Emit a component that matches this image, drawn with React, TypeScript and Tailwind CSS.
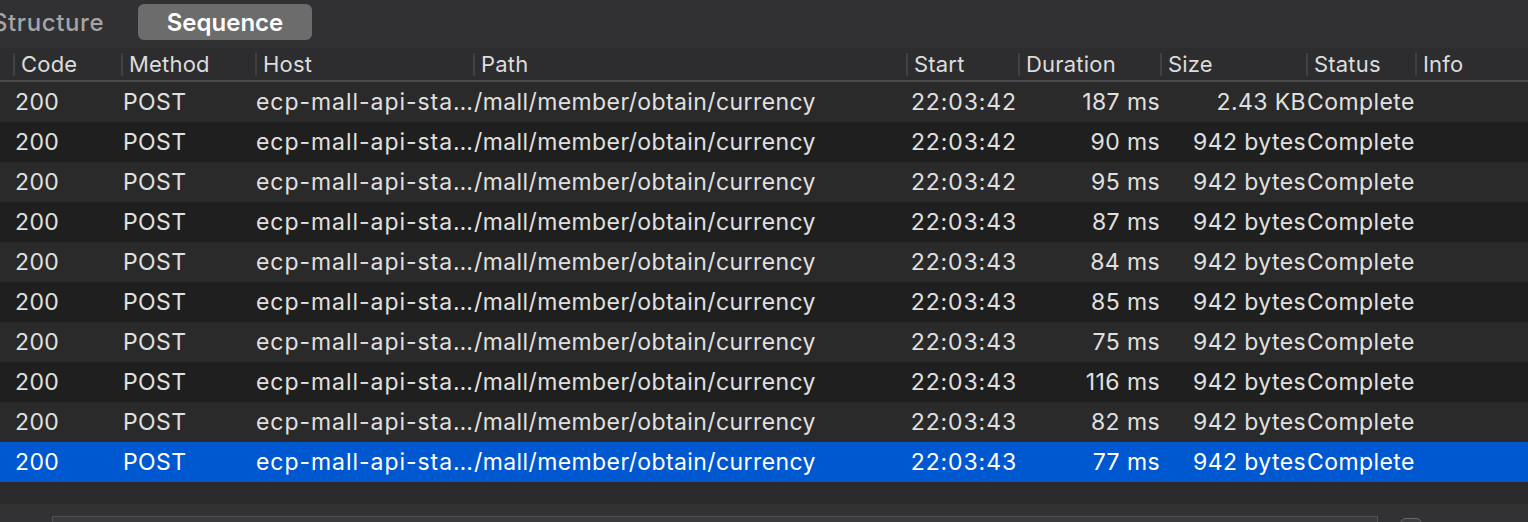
import React from 'react';

type Row = { start: string; duration: string; size: string };

const rows: Row[] = [
  { start: '22:03:42', duration: '187 ms', size: '2.43 KB' },
  { start: '22:03:42', duration: '90 ms', size: '942 bytes' },
  { start: '22:03:42', duration: '95 ms', size: '942 bytes' },
  { start: '22:03:43', duration: '87 ms', size: '942 bytes' },
  { start: '22:03:43', duration: '84 ms', size: '942 bytes' },
  { start: '22:03:43', duration: '85 ms', size: '942 bytes' },
  { start: '22:03:43', duration: '75 ms', size: '942 bytes' },
  { start: '22:03:43', duration: '116 ms', size: '942 bytes' },
  { start: '22:03:43', duration: '82 ms', size: '942 bytes' },
  { start: '22:03:43', duration: '77 ms', size: '942 bytes' },
];

const cols = 'grid grid-cols-[13px_108px_134px_218px_433px_112px_142px_146px_109px_113px]';

const headers = ['Code', 'Method', 'Host', 'Path', 'Start', 'Duration', 'Size', 'Status', 'Info'];

const App = () => {
  return (
    <div className="w-[1528px] h-[522px] overflow-hidden bg-[#2a2a2a] font-['Inter','Liberation_Sans',sans-serif] text-[#e0e0e0] flex flex-col">
      {/* tab bar */}
      <div className="h-[48px] bg-[#313133] flex items-start pt-[4px] shrink-0">
        <div className="ml-[-8px] w-[116px] h-[37px] flex items-center text-[24px] tracking-[0.6px] text-[#a4a4a4] font-medium whitespace-nowrap">
          Structure
        </div>
        <div className="ml-[30px] w-[174px] h-[36px] rounded-md bg-[#6c6c6c] flex items-center justify-center text-[24px] font-semibold text-white pt-[1px]">
          Sequence
        </div>
      </div>

      {/* header */}
      <div className={`${cols} h-[34px] bg-[#2d2d2f] border-b-2 border-[#4a4a4c] shrink-0 text-[22px] text-[#dcdcdc] tracking-[0.2px]`}>
        <div />
        {headers.map((h) => (
          <div key={h} className="flex items-center h-full">
            <div className="w-[2px] h-[23px] bg-[#414143]" />
            <span className="pl-[6px]">{h}</span>
          </div>
        ))}
      </div>

      {/* rows */}
      <div className="flex flex-col shrink-0">
        {rows.map((r, i) => {
          const selected = i === rows.length - 1;
          const bg = selected ? 'bg-[#0058d0] text-white' : i % 2 === 0 ? 'bg-[#2a2a2a]' : 'bg-[#1f1f1f]';
          return (
            <div key={i} className={`${cols} h-[40px] items-center text-[23px] tracking-[0.4px] whitespace-nowrap ${bg}`}>
              <div />
              <div className="pl-[2px]">200</div>
              <div className="pl-[2px]">POST</div>
              <div className="pl-[1px] overflow-hidden tracking-[0.95px]">ecp-mall-api-sta…</div>
              <div className="pl-[1px] overflow-hidden">/mall/member/obtain/currency</div>
              <div className="text-right pr-[1px] tracking-[0.9px]">{r.start}</div>
              <div className="text-right">{r.duration}</div>
              <div className="text-right">{r.size}</div>
              <div className="pl-[1px]">Complete</div>
              <div />
            </div>
          );
        })}
      </div>

      <div className="h-[22px] bg-[#2a2a2a] shrink-0" />

      {/* bottom filter bar */}
      <div className="flex-1 bg-[#323234] flex items-start pt-[12px]">
        <div className="ml-[52px] w-[1326px] h-[30px] border border-[#505052] bg-[#3a3a3c]" />
        <div className="ml-[22px] mt-[2px] w-[22px] h-[22px] rounded-md border border-[#6a6a6a] bg-[#3c3c3e]" />
      </div>
    </div>
  );
};

export default App;
